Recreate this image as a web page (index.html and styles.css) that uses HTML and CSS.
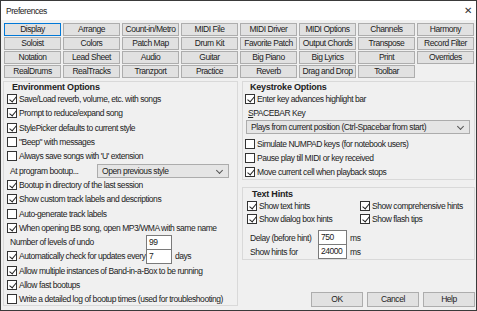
FILE: index.html
```html
<!DOCTYPE html>
<html lang="en">
<head>
    <meta charset="UTF-8">
    <title>Preferences</title>
    <link rel="stylesheet" href="styles.css">
</head>
<body>
    <div class="window">
        <!-- Barra de título -->
        <div class="titlebar">
            <span class="title">Preferences</span>
            <span class="close">&#x2715;</span>
        </div>

        <!-- Botões das páginas -->
        <div class="tabs">
            <button class="tab active">Display</button>
            <button class="tab">Arrange</button>
            <button class="tab">Count-in/Metro</button>
            <button class="tab">MIDI File</button>
            <button class="tab">MIDI Driver</button>
            <button class="tab">MIDI Options</button>
            <button class="tab">Channels</button>
            <button class="tab">Harmony</button>
            <button class="tab">Soloist</button>
            <button class="tab">Colors</button>
            <button class="tab">Patch Map</button>
            <button class="tab">Drum Kit</button>
            <button class="tab">Favorite Patch</button>
            <button class="tab">Output Chords</button>
            <button class="tab">Transpose</button>
            <button class="tab">Record Filter</button>
            <button class="tab">Notation</button>
            <button class="tab">Lead Sheet</button>
            <button class="tab">Audio</button>
            <button class="tab">Guitar</button>
            <button class="tab">Big Piano</button>
            <button class="tab">Big Lyrics</button>
            <button class="tab">Print</button>
            <button class="tab">Overrides</button>
            <button class="tab">RealDrums</button>
            <button class="tab">RealTracks</button>
            <button class="tab">Tranzport</button>
            <button class="tab">Practice</button>
            <button class="tab">Reverb</button>
            <button class="tab">Drag and Drop</button>
            <button class="tab">Toolbar</button>
        </div>

        <div class="panels">
            <!-- Environment Options -->
            <div class="group env">
                <div class="group-title">Environment Options</div>
                <div class="row"><span class="cb on"></span>Save/Load reverb, volume, etc. with songs</div>
                <div class="row"><span class="cb on"></span>Prompt to reduce/expand song</div>
                <div class="row"><span class="cb on"></span>StylePicker defaults to current style</div>
                <div class="row"><span class="cb"></span>"Beep" with messages</div>
                <div class="row"><span class="cb"></span>Always save songs with 'U' extension</div>
                <div class="row indent">
                    <span class="label-boot">At program bootup...</span>
                    <span class="select boot-select">Open previous style</span>
                </div>
                <div class="row"><span class="cb on"></span>Bootup in directory of the last session</div>
                <div class="row"><span class="cb on"></span>Show custom track labels and descriptions</div>
                <div class="row"><span class="cb"></span>Auto-generate track labels</div>
                <div class="row"><span class="cb on"></span>When opening BB song, open MP3/WMA with same name</div>
                <div class="row indent">
                    <span class="label-undo">Number of levels of undo</span>
                    <span class="input small">99</span>
                </div>
                <div class="row">
                    <span class="cb on"></span><span class="label-update">Automatically check for updates every</span>
                    <span class="input small">7</span><span class="unit">days</span>
                </div>
                <div class="row"><span class="cb on"></span>Allow multiple instances of Band-in-a-Box to be running</div>
                <div class="row"><span class="cb on"></span>Allow fast bootups</div>
                <div class="row"><span class="cb"></span>Write a detailed log of bootup times (used for troubleshooting)</div>
            </div>

            <div class="right">
                <!-- Keystroke Options -->
                <div class="group keys">
                    <div class="group-title">Keystroke Options</div>
                    <div class="row"><span class="cb on"></span>Enter key advances highlight bar</div>
                    <div class="row indent"><span><u>S</u>PACEBAR Key</span></div>
                    <div class="select wide">Plays from current position (Ctrl-Spacebar from start)</div>
                    <div class="row"><span class="cb"></span>Simulate NUMPAD keys (for notebook users)</div>
                    <div class="row"><span class="cb"></span>Pause play till MIDI or key received</div>
                    <div class="row"><span class="cb on"></span>Move current cell when playback stops</div>
                </div>

                <!-- Text Hints -->
                <div class="group hints">
                    <div class="group-title">Text Hints</div>
                    <div class="hint-grid">
                        <div class="row"><span class="cb on"></span>Show text hints</div>
                        <div class="row"><span class="cb on"></span>Show comprehensive hints</div>
                        <div class="row"><span class="cb on"></span>Show dialog box hints</div>
                        <div class="row"><span class="cb on"></span>Show flash tips</div>
                    </div>
                    <div class="fields">
                        <div class="row field indent">
                            <span class="label-hint">Delay (before hint)</span>
                            <span class="input mid">750</span><span class="unit">ms</span>
                        </div>
                        <div class="row field indent">
                            <span class="label-hint">Show hints for</span>
                            <span class="input mid">24000</span><span class="unit">ms</span>
                        </div>
                    </div>
                </div>

                <div class="actions">
                    <button class="btn">OK</button>
                    <button class="btn">Cancel</button>
                    <button class="btn">Help</button>
                </div>
            </div>
        </div>
    </div>
</body>
</html>
```

FILE: styles.css
```css
/* Reset básico */
* {
    margin: 0;
    padding: 0;
    box-sizing: border-box;
}

body {
    font-family: 'Liberation Sans', Arial, sans-serif;
    font-size: 8.5px;
    letter-spacing: -0.45px;
    color: #222;
    background: #ffffff;
}

.window {
    width: 477px;
    height: 311px;
    border: 1px solid #3a3a3a;
    background: #f0f0f0;
    overflow: hidden;
}

.titlebar {
    height: 19px;
    background: #ffffff;
    display: flex;
    align-items: center;
    justify-content: space-between;
    padding: 0 4px 0 5px;
}

.title {
    font-size: 8.5px;
}

.close {
    font-size: 10px;
    color: #333;
    letter-spacing: 0;
}

/* Botões das páginas */
.tabs {
    display: grid;
    grid-template-columns: repeat(8, 57px);
    grid-auto-rows: 13px;
    column-gap: 2px;
    row-gap: 1px;
    padding: 3px 0 0 3px;
}

.tab,
.btn {
    font-family: inherit;
    font-size: 8.5px;
    letter-spacing: -0.45px;
    color: #222;
    background: #e1e1e1;
    border: 1px solid #adadad;
    line-height: 11px;
    white-space: nowrap;
}

.tab.active {
    border-color: #0078d7;
}

.panels {
    display: flex;
    gap: 4px;
    padding: 3px 0 0 2px;
}

.group {
    border: 1px solid #d9d9d9;
}

.group-title {
    font-weight: bold;
    font-size: 9px;
    letter-spacing: -0.2px;
    line-height: 10px;
    padding-left: 5px;
}

.env {
    width: 235px;
    height: 225px;
    padding: 0 3px;
}

.row {
    height: 14.3px;
    display: flex;
    align-items: center;
    white-space: nowrap;
}

.row.indent {
    padding-left: 3px;
}

/* Caixas de seleção */
.cb {
    width: 10px;
    height: 10px;
    border: 1px solid #333;
    background: #fff;
    margin-right: 2px;
    flex-shrink: 0;
    position: relative;
}

.cb.on::after {
    content: '';
    position: absolute;
    left: 2.5px;
    top: 0;
    width: 3px;
    height: 6px;
    border: solid #222;
    border-width: 0 1.2px 1.2px 0;
    transform: rotate(40deg);
}

.select {
    background: #e5e5e5;
    border: 1px solid #acacac;
    height: 14px;
    line-height: 12px;
    padding-left: 4px;
    position: relative;
}

.select::after {
    content: '';
    position: absolute;
    right: 6px;
    top: 3px;
    width: 4px;
    height: 4px;
    border: solid #555;
    border-width: 0 1px 1px 0;
    transform: rotate(45deg);
}

.label-boot {
    width: 87px;
}

.boot-select {
    width: 132px;
}

.label-undo {
    width: 136px;
}

.label-update {
    width: 127px;
}

.input {
    background: #fff;
    border: 1px solid #7a7a7a;
    height: 15px;
    line-height: 13px;
    padding-left: 2px;
}

.input.small {
    width: 26px;
}

.input.mid {
    width: 29px;
}

.unit {
    padding-left: 3px;
}

.right {
    width: 233px;
    display: flex;
    flex-direction: column;
}

.keys {
    height: 99px;
    padding: 0 4px 0 2px;
}

.select.wide {
    margin: -1px 0 3px 1px;
}

.hints {
    margin-top: 7px;
    height: 73px;
    padding: 1px 4px 0 4px;
}

.hint-grid {
    display: grid;
    grid-template-columns: 113px 1fr;
}

.hint-grid .row {
    height: 13.5px;
}

.fields {
    padding-top: 4.5px;
}

.row.field {
    height: 14px;
}

.label-hint {
    width: 68px;
}

.actions {
    display: flex;
    justify-content: flex-end;
    gap: 4px;
    margin-top: 32px;
}

.btn {
    width: 52px;
    height: 15px;
}
```
